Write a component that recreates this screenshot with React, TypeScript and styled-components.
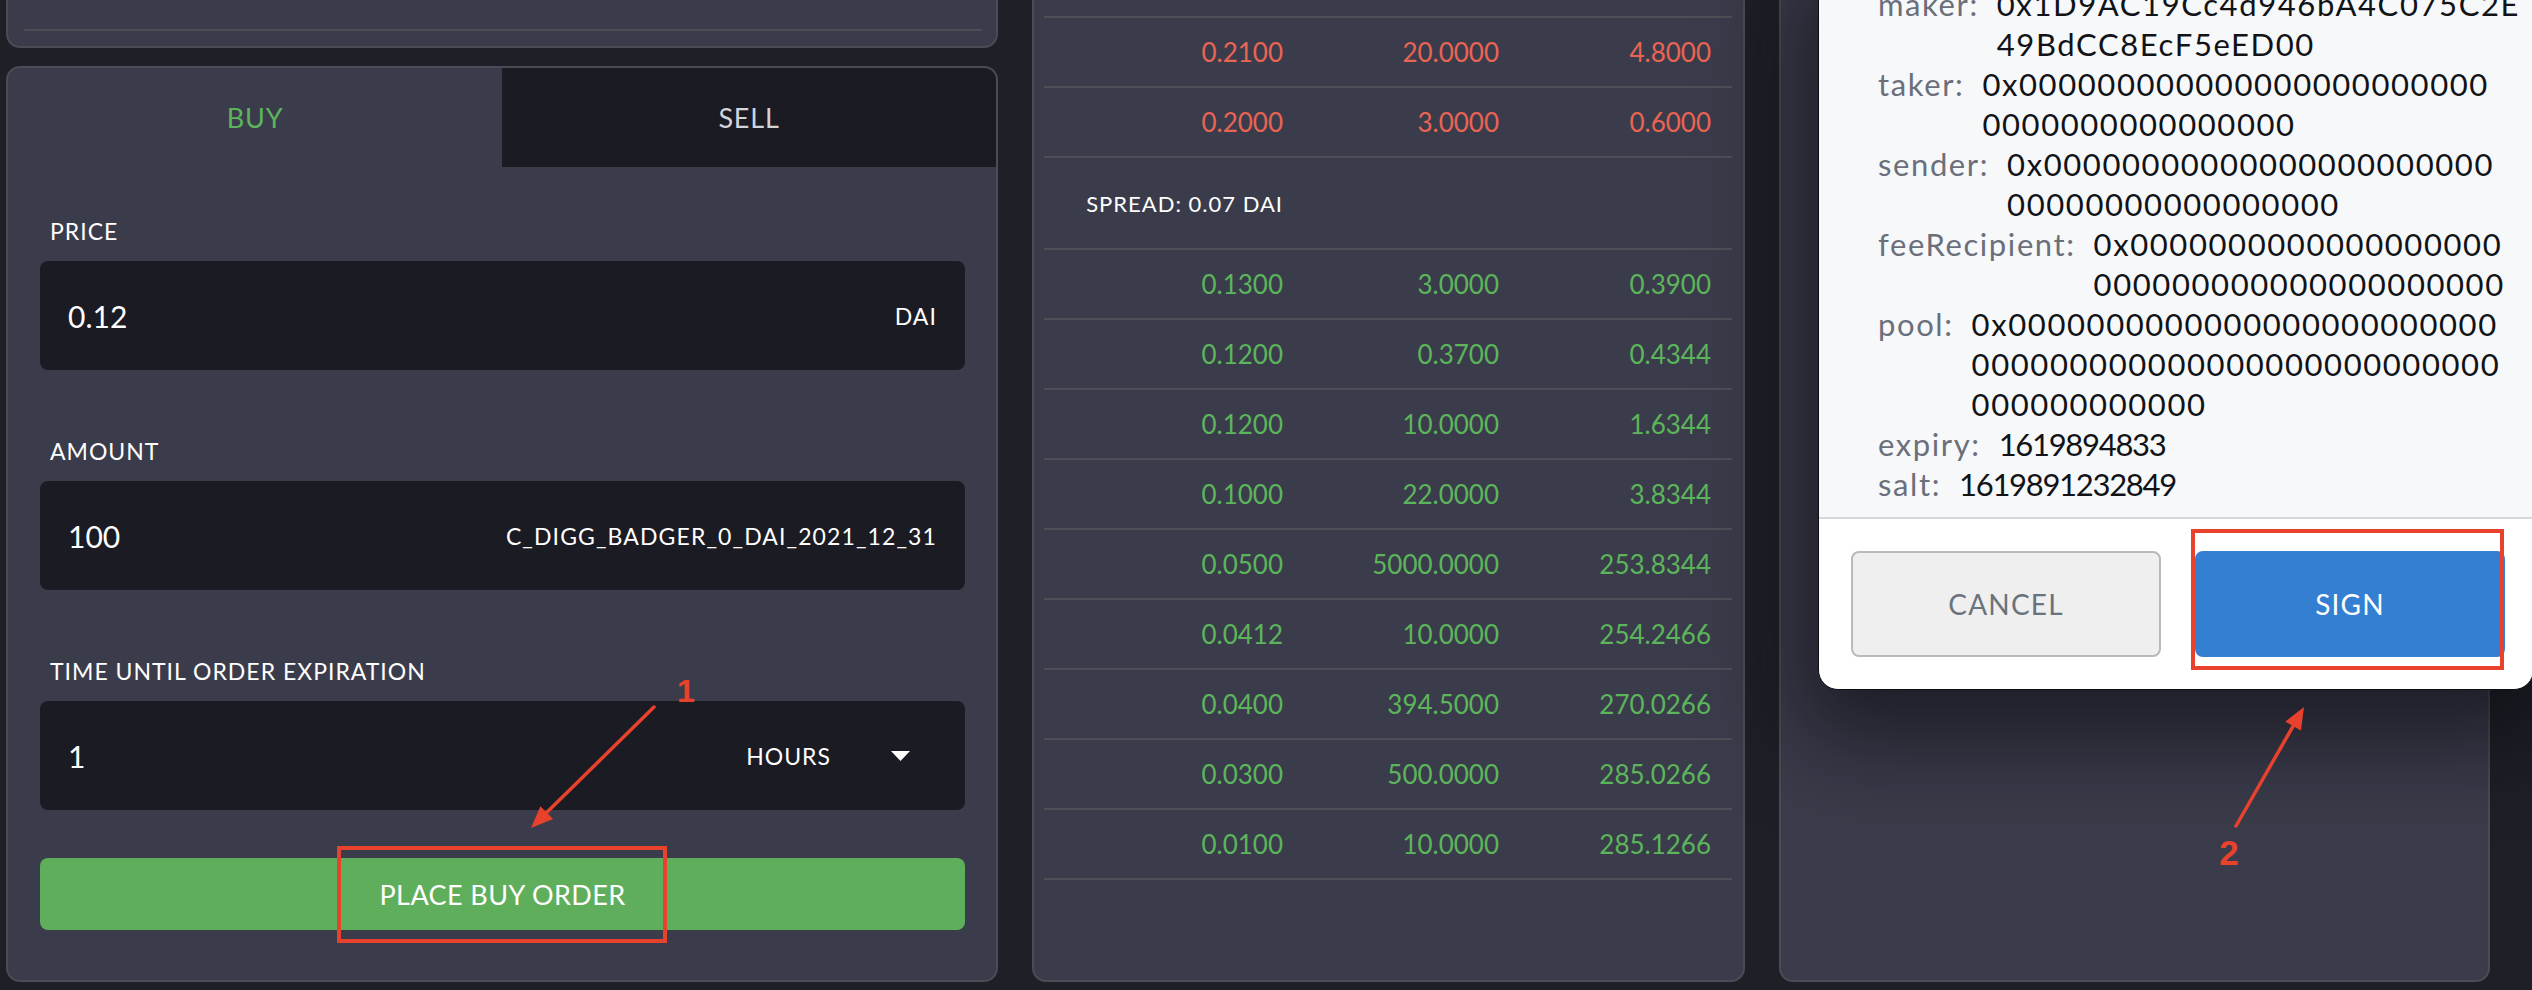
import React from "react";
import styled, { createGlobalStyle } from "styled-components";

const C = {
  page: "#1f1f28",
  panel: "#3b3c4b",
  border: "#4b4b55",
  field: "#1b1b23",
  line: "#4e4e56",
  green: "#5cb55b",
  greenBtn: "#5fae5c",
  red: "#ea6453",
  text: "#ffffff",
  muted: "#d3d3da",
  annot: "#e8412c",
};

const GlobalStyle = createGlobalStyle`
  html, body { margin: 0; padding: 0; background: ${C.page}; }
  body { font-family: Lato, "Noto Sans", sans-serif; color: ${C.text}; overflow: hidden; }
  * { box-sizing: border-box; }
`;

const Viewport = styled.div`
  position: relative;
  width: 2532px;
  height: 990px;
  overflow: hidden;
  display: flex;
  flex-direction: column;
  justify-content: flex-end;
  padding: 0 0 8px 6px;
`;

const Columns = styled.div`
  flex: none;
  height: 1200px;
  display: flex;
  gap: 34px;
`;

const Panel = styled.section`
  background: ${C.panel};
  border: 2px solid ${C.border};
  border-radius: 14px;
  overflow: hidden;
`;

/* ---------- left column ---------- */

const LeftColumn = styled.div`
  width: 992px;
  display: flex;
  flex-direction: column;
  gap: 18px;
`;

const SummaryPanel = styled(Panel)`
  flex: 1;
  display: flex;
  flex-direction: column;
  justify-content: flex-end;
  padding: 0 14px 15px 16px;
`;

const Divider = styled.div`
  height: 2px;
  background: ${C.line};
`;

const TradePanel = styled(Panel)`
  flex: none;
  display: flex;
  flex-direction: column;
`;

const Tabs = styled.div`
  display: grid;
  grid-template-columns: 1fr 1fr;
  height: 99px;
`;

const Tab = styled.div<{ $active?: boolean }>`
  display: flex;
  align-items: center;
  justify-content: center;
  background: ${(p) => (p.$active ? "transparent" : C.field)};
  color: ${(p) => (p.$active ? C.green : C.muted)};
  font-size: 27px;
  letter-spacing: 0.8px;
`;

const Form = styled.div`
  display: flex;
  flex-direction: column;
  padding: 49px 31px 50px 32px;
`;

const Field = styled.div`
  & + & {
    margin-top: 66px;
  }
`;

const Label = styled.div`
  font-size: 23px;
  line-height: 30px;
  letter-spacing: 1px;
  padding-left: 10px;
  margin-bottom: 15px;
`;

const InputBox = styled.div`
  height: 109px;
  background: ${C.field};
  border-radius: 8px;
  display: flex;
  align-items: center;
  padding: 0 28px;
`;

const ValueInput = styled.input`
  flex: 1;
  min-width: 0;
  background: transparent;
  border: none;
  outline: none;
  color: ${C.text};
  font-family: inherit;
  font-size: 30px;
  padding: 0;
`;

const Unit = styled.span`
  font-size: 23px;
  letter-spacing: 1.1px;
`;

const Select = styled.div`
  display: flex;
  align-items: center;
  gap: 60px;
  padding-right: 27px;
  font-size: 23px;
  letter-spacing: 1px;
`;

const PrimaryButton = styled.button`
  margin-top: 48px;
  height: 72px;
  border: none;
  border-radius: 8px;
  background: ${C.greenBtn};
  color: #fff;
  font-family: inherit;
  font-size: 27px;
  letter-spacing: 0.4px;
`;

/* ---------- order book ---------- */

const BookPanel = styled(Panel)`
  width: 713px;
  display: flex;
  flex-direction: column;
  justify-content: flex-end;
  padding: 0 11px 100px 10px;
`;

const BookRow = styled.div<{ $tall?: boolean }>`
  display: grid;
  grid-template-columns: 239px 216px 1fr;
  align-items: center;
  padding-right: 21px;
  height: ${(p) => (p.$tall ? 92 : 70)}px;
  border-bottom: 2px solid ${C.line};
`;

const Cell = styled.div<{ $side: "ask" | "bid" }>`
  text-align: right;
  font-size: 26px;
  color: ${(p) => (p.$side === "ask" ? C.red : C.green)};
`;

const SpreadText = styled.div`
  text-align: right;
  font-size: 22px;
  letter-spacing: 1px;
  color: #fff;
`;

/* ---------- right column ---------- */

const RightPanel = styled(Panel)`
  width: 711px;
`;

const SignModal = styled.div`
  position: absolute;
  left: 1818px;
  top: -41px;
  width: 716px;
  background: #fff;
  border: 1px solid #0d0d12;
  border-radius: 20px;
  overflow: hidden;
  box-shadow: 0 30px 90px 20px rgba(8, 8, 14, 0.6);
  color: #24272a;
`;

const ModalBody = styled.div`
  background: #f7f8fa;
  padding: 24px 16px 13px 59px;
  border-bottom: 2px solid #d6d9dc;
  font-size: 31px;
  line-height: 40px;
  letter-spacing: 1.6px;
`;

const MsgRow = styled.div`
  display: flex;
  gap: 18px;
`;

const MsgKey = styled.div`
  flex: none;
  color: #6a6f7b;
`;

const MsgValue = styled.div<{ $numeric?: boolean }>`
  display: flex;
  flex-direction: column;
  color: #111316;
  letter-spacing: ${(p) => (p.$numeric ? "-1.3px" : "1.6px")};
`;

const ModalFooter = styled.div`
  display: flex;
  gap: 34px;
  padding: 32px 0 32px 32px;
`;

const ModalButton = styled.button<{ $primary?: boolean }>`
  width: 310px;
  height: 106px;
  border-radius: 8px;
  border: 2px solid ${(p) => (p.$primary ? "#347fd1" : "#b9b9b9")};
  background: ${(p) => (p.$primary ? "#347fd1" : "#efefef")};
  color: ${(p) => (p.$primary ? "#ffffff" : "#6a737d")};
  font-family: Lato, "Noto Sans", sans-serif;
  font-size: 28px;
  letter-spacing: 1.2px;
`;

/* ---------- annotations ---------- */

const Annotations = styled.svg`
  position: absolute;
  left: 0;
  top: 0;
  width: 2532px;
  height: 990px;
  pointer-events: none;
`;

const CalloutNumber = styled.text`
  font-family: "Liberation Sans", Arial, sans-serif;
  font-weight: 700;
  fill: ${C.annot};
`;

/* ---------- data ---------- */

type Row = [string, string, string];

const asks: Row[] = [
  ["0.2100", "20.0000", "4.8000"],
  ["0.2000", "3.0000", "0.6000"],
];

const bids: Row[] = [
  ["0.1300", "3.0000", "0.3900"],
  ["0.1200", "0.3700", "0.4344"],
  ["0.1200", "10.0000", "1.6344"],
  ["0.1000", "22.0000", "3.8344"],
  ["0.0500", "5000.0000", "253.8344"],
  ["0.0412", "10.0000", "254.2466"],
  ["0.0400", "394.5000", "270.0266"],
  ["0.0300", "500.0000", "285.0266"],
  ["0.0100", "10.0000", "285.1266"],
];

const z = (n: number) => "0".repeat(n);

const message: [string, string[], boolean][] = [
  ["maker:", ["0x1D9AC19Cc4d946bA4C075C2E", "49BdCC8EcF5eED00"], false],
  ["taker:", ["0x" + z(24), z(16)], false],
  ["sender:", ["0x" + z(23), z(17)], false],
  ["feeRecipient:", ["0x" + z(19), z(21)], false],
  ["pool:", ["0x" + z(25), z(27), z(12)], false],
  ["expiry:", ["1619894833"], true],
  ["salt:", ["1619891232849"], true],
];

const Caret = () => (
  <svg width="19" height="10" viewBox="0 0 19 10">
    <polygon points="0,0 19,0 9.5,10" fill="#fff" />
  </svg>
);

export default function App() {
  return (
    <>
      <GlobalStyle />
      <Viewport>
        <Columns>
          <LeftColumn>
            <SummaryPanel>
              <Divider />
            </SummaryPanel>
            <TradePanel>
              <Tabs>
                <Tab $active>BUY</Tab>
                <Tab>SELL</Tab>
              </Tabs>
              <Form>
                <Field>
                  <Label>PRICE</Label>
                  <InputBox>
                    <ValueInput readOnly value="0.12" />
                    <Unit>DAI</Unit>
                  </InputBox>
                </Field>
                <Field>
                  <Label>AMOUNT</Label>
                  <InputBox>
                    <ValueInput readOnly value="100" />
                    <Unit>C_DIGG_BADGER_0_DAI_2021_12_31</Unit>
                  </InputBox>
                </Field>
                <Field>
                  <Label>TIME UNTIL ORDER EXPIRATION</Label>
                  <InputBox>
                    <ValueInput readOnly value="1" />
                    <Select>
                      <span>HOURS</span>
                      <Caret />
                    </Select>
                  </InputBox>
                </Field>
                <PrimaryButton>PLACE BUY ORDER</PrimaryButton>
              </Form>
            </TradePanel>
          </LeftColumn>

          <BookPanel>
            <BookRow />
            {asks.map((r, i) => (
              <BookRow key={"a" + i}>
                {r.map((v, j) => (
                  <Cell key={j} $side="ask">
                    {v}
                  </Cell>
                ))}
              </BookRow>
            ))}
            <BookRow $tall>
              <SpreadText>SPREAD: 0.07 DAI</SpreadText>
            </BookRow>
            {bids.map((r, i) => (
              <BookRow key={"b" + i}>
                {r.map((v, j) => (
                  <Cell key={j} $side="bid">
                    {v}
                  </Cell>
                ))}
              </BookRow>
            ))}
          </BookPanel>

          <RightPanel />
        </Columns>

        <SignModal>
          <ModalBody>
            {message.map(([k, lines, numeric]) => (
              <MsgRow key={k}>
                <MsgKey>{k}</MsgKey>
                <MsgValue $numeric={numeric}>
                  {lines.map((l, i) => (
                    <span key={i}>{l}</span>
                  ))}
                </MsgValue>
              </MsgRow>
            ))}
          </ModalBody>
          <ModalFooter>
            <ModalButton>CANCEL</ModalButton>
            <ModalButton $primary>SIGN</ModalButton>
          </ModalFooter>
        </SignModal>

        <Annotations viewBox="0 0 2532 990">
          <rect x="339" y="848" width="326" height="93" fill="none" stroke={C.annot} strokeWidth="4" />
          <line x1="654" y1="707" x2="546.7" y2="812.6" stroke={C.annot} strokeWidth="3.5" strokeLinecap="round" />
          <polygon points="531,828 553,819 540.4,806.2" fill={C.annot} />
          <CalloutNumber x="686" y="702" fontSize="32" textAnchor="middle">
            1
          </CalloutNumber>

          <rect x="2193" y="531" width="309" height="137" fill="none" stroke={C.annot} strokeWidth="4" />
          <line x1="2236" y1="826" x2="2293.1" y2="726.1" stroke={C.annot} strokeWidth="3.5" strokeLinecap="round" />
          <polygon points="2304,707 2300.9,730.6 2285.3,721.6" fill={C.annot} />
          <CalloutNumber x="2229" y="865" fontSize="35" textAnchor="middle">
            2
          </CalloutNumber>
        </Annotations>
      </Viewport>
    </>
  );
}
